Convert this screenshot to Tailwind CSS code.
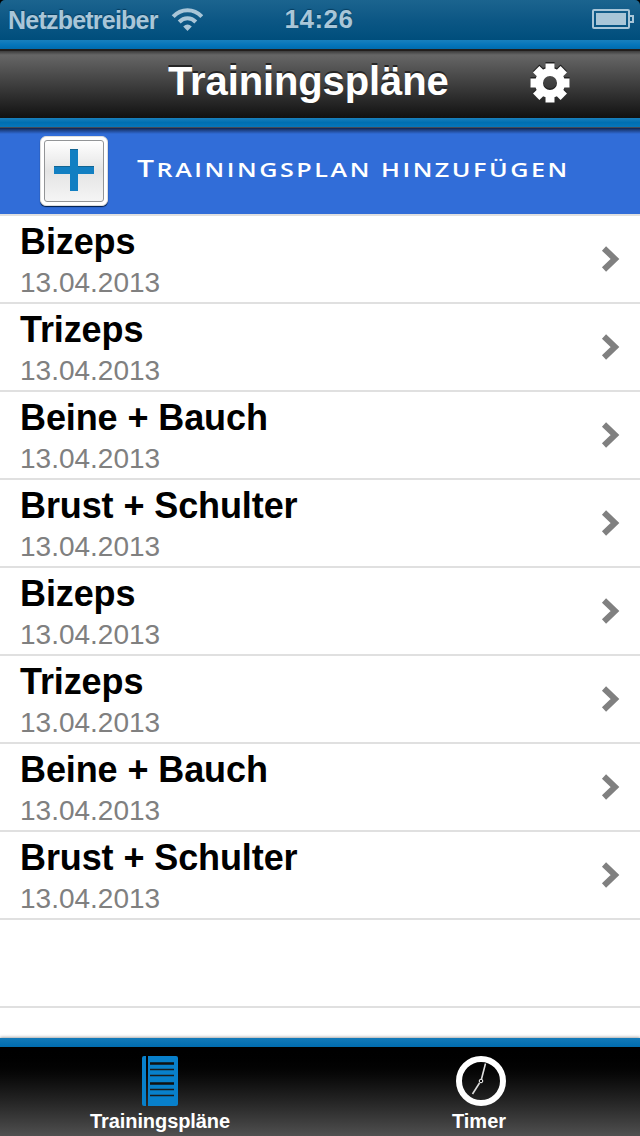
<!DOCTYPE html>
<html lang="de">
<head>
<meta charset="utf-8">
<title>Trainingspläne</title>
<script src="https://cdn.jsdelivr.net/npm/@tailwindcss/browser@4"></script>
</head>
<body class="bg-black">
<div class="flex h-[1136px] w-[640px] flex-col overflow-hidden bg-white font-['Liberation_Sans',sans-serif]">
  <div class="bg-black">
    <div class="flex h-10 items-start rounded-t-[5px] bg-linear-to-b from-[#1b648f] via-[#0c5785] to-[#004e7c] text-[#a9c6d8]">
      <div class="flex w-[240px] pl-2"><span class="w-[163px] text-[25px] font-bold leading-10 tracking-[-0.78px] [text-shadow:0_-1px_1px_#063e61]">Netzbetreiber</span>
        <svg class="mt-[7px] h-6 w-8" viewBox="0 0 32 24" fill="none" stroke="#a9c6d8" stroke-width="4"><path d="M2.200 9.600C10 1 23 1 30.800 9.600"/><path d="M8.200 15C13 10 20 10 24.800 15"/><path d="M12.200 19.500Q16.500 15.500 20.800 19.500L16.500 24Z" fill="#a9c6d8" stroke="none"/></svg>
      </div>
      <div class="w-[158px] text-center text-[26px] font-bold leading-[39px] tracking-[0.5px] [text-shadow:0_-1px_1px_#063e61]">14:26</div>
      <div class="flex flex-1 justify-end pr-1.5"><svg class="mt-[9px] h-5 w-[42px]" viewBox="0 0 42 20"><rect x="1" y="1" width="36" height="18" rx="1" fill="none" stroke="#a9c6d8" stroke-width="2"/><rect x="4" y="4" width="30" height="12" fill="#a9c6d8"/><path d="M38 7h3v6h-3" fill="none" stroke="#a9c6d8" stroke-width="2"/></svg></div>
    </div>
  </div>
  <div class="h-[9px] bg-linear-to-b from-[#1880bd] via-[#0676bb] to-[#006bae]"></div>
  <div class="flex h-[69px] border-t-2 border-[#221e1c] bg-[linear-gradient(to_bottom,#3c3c3c_0px,#666_4px,#111_67px)] text-white">
    <h1 class="w-[498px] pl-[168px] text-[40px] font-bold leading-[60px] tracking-[-0.12px] [text-shadow:0_-2px_0_#252525]">Trainingspläne</h1>
    <svg class="mt-[11px] ml-8 h-[42px] w-10" viewBox="-20 -21 40 42">
      <defs><g id="gear"><circle r="11" fill="none" stroke-width="8"/><g stroke="none"><path id="tooth" d="M-4.500-12V-19.500H4.500V-12Z"/><use href="#tooth" transform="rotate(45)"/><use href="#tooth" transform="rotate(90)"/><use href="#tooth" transform="rotate(135)"/><use href="#tooth" transform="rotate(180)"/><use href="#tooth" transform="rotate(225)"/><use href="#tooth" transform="rotate(270)"/><use href="#tooth" transform="rotate(315)"/></g></g></defs>
      <use href="#gear" y="-1.500" fill="#222" stroke="#222"/><use href="#gear" fill="#fff" stroke="#fff"/>
    </svg>
  </div>
  <div class="h-[9px] bg-linear-to-b from-[#1880bd] via-[#006fb2] to-[#0676bb]"></div>
  <div class="flex h-[87px] border-t border-[#444a59] bg-[linear-gradient(to_bottom,#10234d_0px,#1c3f80_2px,#316dd8_6px)]">
    <div class="mt-2 ml-10 flex h-[70px] w-[68px] rounded-[6px] border border-[#dedede] bg-white p-[3px] shadow-[0_1px_1px_#001d48]">
      <div class="flex flex-1 items-center justify-center rounded-[3px] border border-[#939597] bg-linear-to-b from-white via-[#e4e4e4] to-[#f5f5f5]">
        <svg class="mb-0.5 h-[42px] w-10" viewBox="0 0 40 42"><path d="M16 0h8v17h16v8H24v17h-8V25H0v-8h16Z" fill="#127fc2"/><path d="M0 17.500h16M24 17.500h16M16 .5h8" stroke="#116492"/></svg>
      </div>
    </div>
    <div class="ml-[29px] h-[76px] origin-left scale-x-[1.255] whitespace-nowrap font-['Open_Sans',sans-serif] text-[20px] font-semibold leading-[79px] tracking-[2.04px] text-white"><span class="text-[24px]">T</span>RAININGSPLAN HINZUFÜGEN</div>
  </div>
  <main id="plans" class="h-[824px] overflow-hidden border-t-2 border-[#e0e0e0]"></main>
  <div class="h-[9px] bg-linear-to-b from-[#1279b8] to-[#006cae] shadow-[0_-1px_3px_#aaa]"></div>
  <nav class="flex h-[89px] bg-linear-to-b from-black to-[#505050] text-[20px] font-bold text-white">
    <div class="flex flex-1 flex-col items-center pt-[9px]">
      <svg class="h-[50px] w-9" viewBox="0 0 36 50"><path d="M2 0h2v50H2a2 2 0 0 1-2-2V2a2 2 0 0 1 2-2ZM6 0h28a2 2 0 0 1 2 2v46a2 2 0 0 1-2 2H6Z" fill="#0880cb"/><path d="M8 7.500h24M8 27.500h24" stroke="#111" stroke-width="2.600"/><path d="M8 13.500h24M8 19.500h24M8 33.500h24M8 39.500h24" stroke="#1a1a1a" stroke-width="1.500"/></svg>
      <div class="mt-[3px] leading-6 tracking-[-0.08px]">Trainingspläne</div>
    </div>
    <div class="flex flex-1 flex-col items-center pt-[9px]">
      <svg class="ml-0.5 size-[50px]" viewBox="0 0 50 50" fill="none" stroke="#fff"><circle cx="25" cy="25" r="22" stroke-width="6"/><path d="M25.500 23L29.500 7.500M23.500 27L16.500 38" stroke="#ddd" stroke-width="1.600"/><circle cx="25" cy="25" r="1.800"/></svg>
      <div class="mt-[3px] mr-0.5 leading-6">Timer</div>
    </div>
  </nav>
</div>
<script>
const names = ["Bizeps", "Trizeps", "Beine + Bauch", "Brust + Schulter", "Bizeps", "Trizeps", "Beine + Bauch", "Brust + Schulter"];
document.getElementById("plans").innerHTML = names.map(n => `
  <div class="flex h-[88px] items-start justify-between border-b-2 border-[#e0e0e0] pl-5 pr-5">
    <div>
      <div class="h-[49px] text-[36px] font-bold leading-[52px] tracking-[-0.1px] text-black">${n}</div>
      <div class="text-[28px] leading-[36px] text-[#808080]">13.04.2013</div>
    </div>
    <svg class="mt-[30px] h-[26px] w-[19px]" viewBox="0 0 19 26"><path d="M3 2.500L14 13L3 23.500" fill="none" stroke="#808080" stroke-width="6"/></svg>
  </div>`).join("") + '<div class="h-[88px] border-b-2 border-[#e0e0e0]"></div>';
</script>
</body>
</html>
